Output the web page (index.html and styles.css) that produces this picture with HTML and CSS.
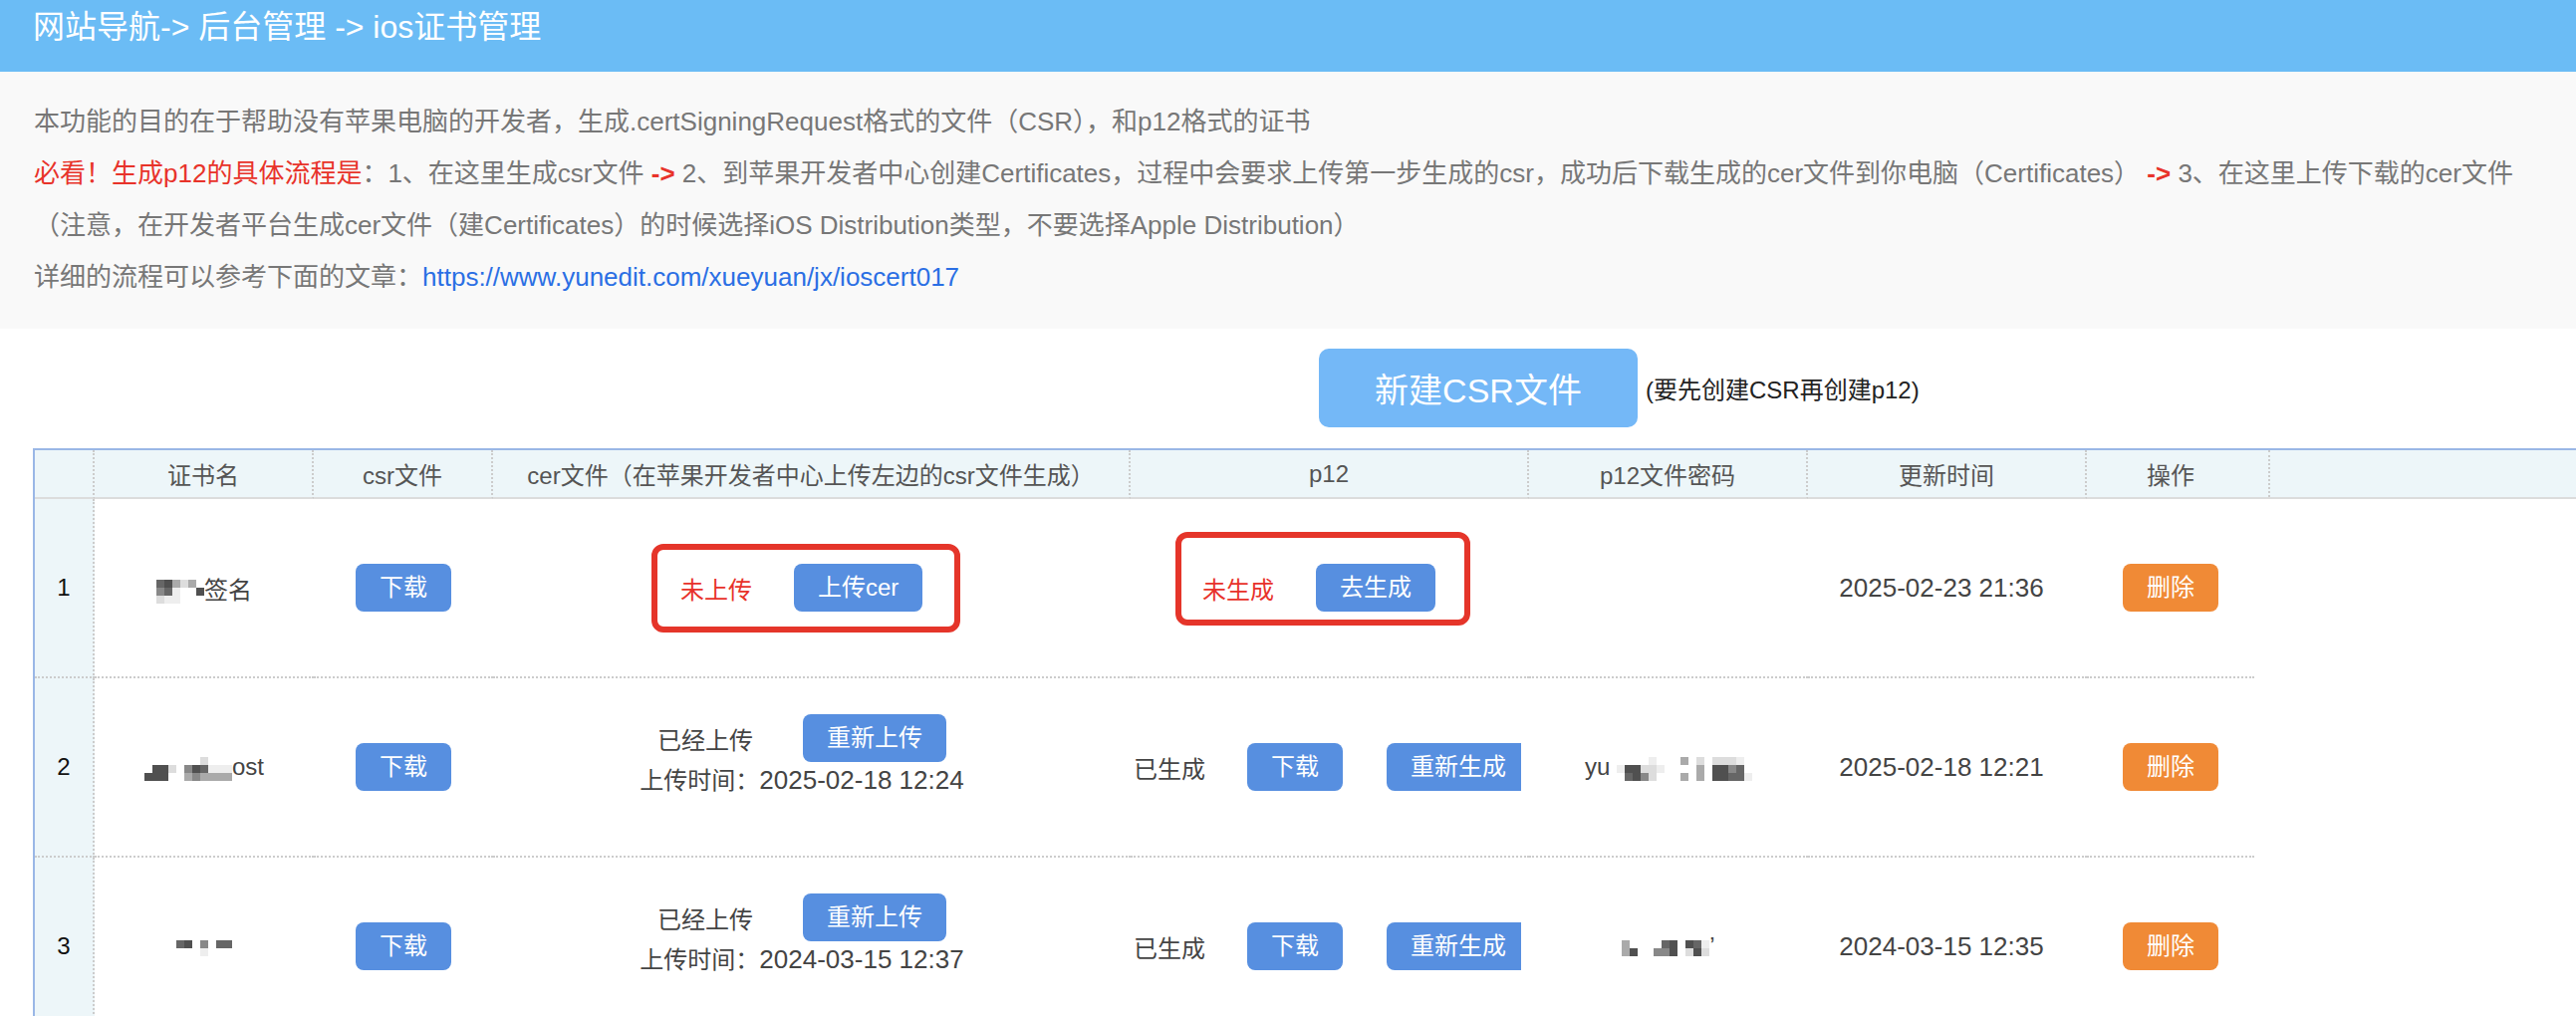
FILE: index.html
```html
<!DOCTYPE html>
<html lang="zh-CN">
<head>
    <meta charset="UTF-8">
    <title>ios证书管理</title>
    <link rel="stylesheet" href="styles.css">
</head>
<body>
    <div class="topbar">网站导航-&gt; 后台管理 -&gt; ios证书管理</div>

    <div class="intro">
        <p>本功能的目的在于帮助没有苹果电脑的开发者，生成.certSigningRequest格式的文件（CSR），和p12格式的证书</p>
        <p><span class="warn">必看！生成p12的具体流程是</span>：1、在这里生成csr文件 <span class="arrow">-&gt;</span> 2、到苹果开发者中心创建Certificates，过程中会要求上传第一步生成的csr，成功后下载生成的cer文件到你电脑（Certificates） <span class="arrow">-&gt;</span> 3、在这里上传下载的cer文件<br>（注意，在开发者平台生成cer文件（建Certificates）的时候选择iOS Distribution类型，不要选择Apple Distribution）</p>
        <p>详细的流程可以参考下面的文章：<a href="#">https://www.yunedit.com/xueyuan/jx/ioscert017</a></p>
    </div>

    <div class="create-row">
        <button class="btn-create">新建CSR文件</button>
        <span class="create-tip">(要先创建CSR再创建p12)</span>
    </div>

    <div class="grid-wrap">
        <table class="cert-table">
            <colgroup>
                <col class="c-num">
                <col class="c-name">
                <col class="c-csr">
                <col class="c-cer">
                <col class="c-p12">
                <col class="c-pwd">
                <col class="c-time">
                <col class="c-op">
                <col class="c-fill">
            </colgroup>
            <thead>
                <tr>
                    <th></th>
                    <th>证书名</th>
                    <th>csr文件</th>
                    <th>cer文件（在苹果开发者中心上传左边的csr文件生成）</th>
                    <th>p12</th>
                    <th>p12文件密码</th>
                    <th>更新时间</th>
                    <th class="op-head">操作</th>
                    <th class="filler"><div class="fill-line"></div></th>
                </tr>
            </thead>
            <tbody>
                <tr>
                    <td class="num">1</td>
                    <td><span class="mosaic mosaic-6"><i class="m5"></i><i class="m6"></i><i class="m3"></i><i class="m2"></i><i class="m3"></i><i></i><i class="m4"></i><i class="m5"></i><i class="m1"></i><i></i><i></i><i class="m6"></i><i class="m2"></i><i class="m1"></i><i class="m1"></i><i></i><i></i><i></i></span>签名</td>
                    <td><button class="btn">下载</button></td>
                    <td>
                        <div class="mark mark-cer"><span class="state-red">未上传</span><button class="btn gap">上传cer</button></div>
                    </td>
                    <td>
                        <div class="mark mark-p12"><span class="state-red">未生成</span><button class="btn gap">去生成</button></div>
                    </td>
                    <td></td>
                    <td class="time">2025-02-23 21:36</td>
                    <td><button class="btn btn-danger">删除</button></td>
                    <td class="filler"></td>
                </tr>
                <tr>
                    <td class="num">2</td>
                    <td><span class="mosaic mosaic-11"><i></i><i></i><i></i><i></i><i></i><i></i><i></i><i class="m2"></i><i></i><i></i><i></i><i></i><i class="m6"></i><i class="m6"></i><i class="m2"></i><i></i><i class="m4"></i><i class="m6"></i><i class="m5"></i><i class="m1"></i><i class="m1"></i><i class="m1"></i><i class="m6"></i><i class="m6"></i><i class="m6"></i><i></i><i></i><i class="m3"></i><i class="m4"></i><i class="m3"></i><i class="m3"></i><i class="m3"></i><i class="m3"></i></span>ost</td>
                    <td><button class="btn">下载</button></td>
                    <td>
                        <div class="cer-done">
                            <div class="cer-line">已经上传<button class="btn gap-wide">重新上传</button></div>
                            <div class="cer-time">上传时间：<span class="date">2025-02-18 12:24</span></div>
                        </div>
                    </td>
                    <td>
                        <div class="p12-done">已生成<button class="btn gap">下载</button><button class="btn gap-more">重新生成</button></div>
                    </td>
                    <td>yu <span class="mosaic mosaic-17"><i></i><i></i><i></i><i></i><i class="m1"></i><i></i><i></i><i></i><i class="m3"></i><i></i><i class="m2"></i><i></i><i class="m2"></i><i class="m2"></i><i class="m2"></i><i class="m1"></i><i></i><i class="m1"></i><i class="m6"></i><i class="m6"></i><i class="m2"></i><i class="m2"></i><i class="m1"></i><i></i><i></i><i></i><i></i><i class="m3"></i><i></i><i class="m6"></i><i class="m6"></i><i class="m4"></i><i class="m5"></i><i></i><i></i><i class="m5"></i><i class="m6"></i><i class="m4"></i><i class="m2"></i><i></i><i></i><i></i><i class="m3"></i><i></i><i class="m3"></i><i></i><i class="m6"></i><i class="m6"></i><i class="m5"></i><i class="m5"></i><i class="m1"></i></span></td>
                    <td class="time">2025-02-18 12:21</td>
                    <td><button class="btn btn-danger">删除</button></td>
                    <td class="filler"></td>
                </tr>
                <tr>
                    <td class="num">3</td>
                    <td><span class="mosaic mosaic-7"><i class="m5"></i><i class="m6"></i><i></i><i class="m4"></i><i></i><i class="m5"></i><i class="m5"></i><i></i><i></i><i></i><i class="m1"></i><i></i><i></i><i></i></span></td>
                    <td><button class="btn">下载</button></td>
                    <td>
                        <div class="cer-done">
                            <div class="cer-line">已经上传<button class="btn gap-wide">重新上传</button></div>
                            <div class="cer-time">上传时间：<span class="date">2024-03-15 12:37</span></div>
                        </div>
                    </td>
                    <td>
                        <div class="p12-done">已生成<button class="btn gap">下载</button><button class="btn gap-more">重新生成</button></div>
                    </td>
                    <td><span class="mosaic mosaic-11"><i class="m3"></i><i></i><i></i><i></i><i></i><i class="m5"></i><i class="m6"></i><i></i><i class="m6"></i><i class="m5"></i><i class="m1"></i><i class="m3"></i><i class="m6"></i><i></i><i></i><i class="m4"></i><i class="m4"></i><i class="m6"></i><i></i><i class="m2"></i><i class="m6"></i><i class="m2"></i></span>’</td>
                    <td class="time">2024-03-15 12:35</td>
                    <td><button class="btn btn-danger">删除</button></td>
                    <td class="filler"></td>
                </tr>
            </tbody>
        </table>
    </div>
</body>
</html>
```

FILE: styles.css
```css
html, body {
    margin: 0;
    overflow: hidden;
    background: #fff;
    font-family: "Liberation Sans", "Noto Sans CJK SC", sans-serif;
}
.topbar {
    height: 72px;
    box-sizing: border-box;
    padding: 7px 33px 0;
    background: #6bbcf5;
    color: #fff;
    font-size: 32px;
    line-height: 40px;
}
.intro {
    padding: 24px 0 26px 34px;
    background: #f9f9f9;
    color: #777;
    font-size: 26px;
    line-height: 52px;
}
.intro p {
    margin: 0;
    white-space: nowrap;
}
.warn {
    color: #e8332a;
}
.arrow {
    color: #e8332a;
    font-weight: bold;
}
.intro a {
    color: #2b6fe4;
    text-decoration: none;
}
.create-row {
    display: flex;
    align-items: center;
    height: 79px;
    margin: 20px 0 0 1324px;
}
.btn-create {
    width: 320px;
    height: 79px;
    border: 0;
    border-radius: 10px;
    background: #74b8f7;
    color: #fff;
    font-family: inherit;
    font-size: 34px;
}
.create-tip {
    margin-left: 8px;
    color: #222;
    font-size: 24px;
}
.grid-wrap {
    width: 2700px;
    margin: 21px 0 0 33px;
    border-top: 2px solid #9ab7e6;
    border-left: 2px solid #9ab7e6;
}
.cert-table {
    width: 2647px;
    table-layout: fixed;
    border-collapse: separate;
    border-spacing: 0;
    color: #444;
    font-size: 24px;
}
.c-num { width: 60px; }
.c-name { width: 220px; }
.c-csr { width: 180px; }
.c-cer { width: 640px; }
.c-p12 { width: 400px; }
.c-pwd { width: 280px; }
.c-time { width: 280px; }
.c-op { width: 168px; }
.c-fill { width: 419px; }
.cert-table thead tr {
    height: 49px;
}
.cert-table th {
    padding: 0;
    background: #edf6f9;
    color: #555;
    font-weight: normal;
    text-align: center;
    border-right: 2px dotted #ccc;
    border-bottom: 2px solid #dcdcdc;
}
.cert-table th.op-head,
.cert-table th.filler {
    border-right: 0;
}
.fill-line {
    height: 47px;
    margin-left: 14px;
    border-left: 2px dotted #ccc;
}
.cert-table tbody tr {
    height: 180px;
}
.cert-table td {
    padding: 0;
    text-align: center;
    vertical-align: middle;
    border-bottom: 2px dotted #ccc;
    white-space: nowrap;
}
.cert-table td.num {
    background: #edf6f9;
    color: #111;
    border-right: 2px dotted #ccc;
}
.cert-table td.filler {
    border-bottom: 0;
}
.cert-table td.time {
    padding-right: 12px;
    font-size: 26px;
}
.date {
    font-size: 26px;
}
.btn {
    height: 48px;
    padding: 0 24px;
    border: 0;
    border-radius: 8px;
    background: #578fe0;
    color: #fff;
    font-family: inherit;
    font-size: 24px;
    line-height: 48px;
    vertical-align: middle;
    cursor: pointer;
}
.btn-danger {
    background: #f08a36;
}
.gap {
    margin-left: 42px;
}
.gap-more {
    margin-left: 44px;
}
.gap-wide {
    margin-left: 50px;
}
.mark {
    display: flex;
    align-items: center;
    width: fit-content;
    box-sizing: border-box;
    border: 6px solid #e5352a;
    border-radius: 12px;
}
.mark-cer {
    height: 89px;
    margin-left: 159px;
    padding: 0 32px 0 23px;
}
.mark-p12 {
    height: 94px;
    margin: 0 0 18px 45px;
    padding: 18px 29px 0 21px;
}
.state-red {
    color: #e8322a;
}
.cer-done {
    padding: 0 20px 21px 0;
}
.cer-line {
    display: flex;
    align-items: center;
    justify-content: center;
    height: 48px;
}
.cer-time {
    line-height: 36px;
}
.p12-done {
    display: flex;
    align-items: center;
    margin-right: 8px;
    padding-left: 3px;
    overflow: hidden;
}
.p12-done .btn {
    flex-shrink: 0;
}
.mosaic {
    display: inline-grid;
    grid-auto-rows: 8px;
    vertical-align: middle;
}
.mosaic-6 { grid-template-columns: repeat(6, 8px); }
.mosaic-7 { grid-template-columns: repeat(7, 8px); }
.mosaic-11 { grid-template-columns: repeat(11, 8px); }
.mosaic-17 { grid-template-columns: repeat(17, 8px); }
.mosaic i { display: block; }
.mosaic .m1 { background: #eee; }
.mosaic .m2 { background: #ddd; }
.mosaic .m3 { background: #aaa; }
.mosaic .m4 { background: #888; }
.mosaic .m5 { background: #666; }
.mosaic .m6 { background: #505050; }
```
